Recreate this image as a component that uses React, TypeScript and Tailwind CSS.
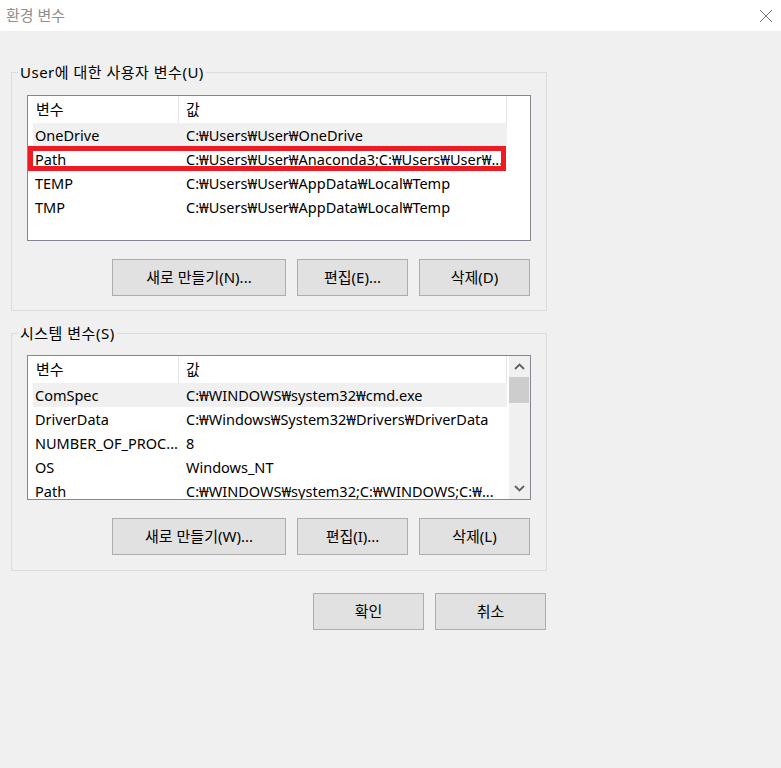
import React from "react";

type Row = { name: string; value: string; hover?: boolean; marked?: boolean };

const userVars: Row[] = [
  { name: "OneDrive", value: "C:₩Users₩User₩OneDrive", hover: true },
  { name: "Path", value: "C:₩Users₩User₩Anaconda3;C:₩Users₩User₩...", marked: true },
  { name: "TEMP", value: "C:₩Users₩User₩AppData₩Local₩Temp" },
  { name: "TMP", value: "C:₩Users₩User₩AppData₩Local₩Temp" },
];

const systemVars: Row[] = [
  { name: "ComSpec", value: "C:₩WINDOWS₩system32₩cmd.exe", hover: true },
  { name: "DriverData", value: "C:₩Windows₩System32₩Drivers₩DriverData" },
  { name: "NUMBER_OF_PROC...", value: "8" },
  { name: "OS", value: "Windows_NT" },
  { name: "Path", value: "C:₩WINDOWS₩system32;C:₩WINDOWS;C:₩..." },
];

function Chevron({ up }: { up?: boolean }) {
  return (
    <svg width="11" height="7" viewBox="0 0 11 7" className="block">
      <path
        d={up ? "M1 6 L5.5 1.5 L10 6" : "M1 1 L5.5 5.5 L10 1"}
        fill="none"
        stroke="#606060"
        strokeWidth="1.8"
      />
    </svg>
  );
}

function WinButton({ label, w }: { label: string; w: string }) {
  return (
    <button
      type="button"
      className={`${w} h-[37px] border border-[#adadad] bg-[#e1e1e1] text-[15px] leading-none text-black`}
    >
      {label}
    </button>
  );
}

function VarList({ rows, scroll, h }: { rows: Row[]; scroll?: boolean; h: string }) {
  return (
    <div className={`flex ${h} w-full overflow-hidden border border-[#828790] bg-white`}>
      <div className="min-w-0 flex-1 pl-[5px]">
        <div className="flex h-[27px] w-[474px] items-center border-r border-[#e5e5e5]">
          <div className="w-[145px] shrink-0 pl-[3px]">변수</div>
          <div className="h-full w-px shrink-0 bg-[#e5e5e5]" />
          <div className="pl-[7px]">값</div>
        </div>
        {rows.map((r) => (
          <div
            key={r.name}
            className={`relative flex h-[24px] w-[474px] items-center whitespace-nowrap pt-px text-[14.5px] ${
              r.hover ? "bg-[#f0f0f0]" : ""
            }`}
          >
            <div className="w-[145px] shrink-0 pl-[2px]">{r.name}</div>
            <div className="w-px shrink-0" />
            <div className="pl-[7px]">{r.value}</div>
            {r.marked && (
              <div className="absolute -left-[5px] -top-[1px] right-[1px] bottom-0 border-[5px] border-[#ed1c24]" />
            )}
          </div>
        ))}
      </div>
      {scroll && (
        <div className="flex w-[21px] shrink-0 flex-col bg-[#f0f0f0]">
          <div className="flex h-[21px] items-center justify-center">
            <Chevron up />
          </div>
          <div className="mr-px h-[26px] bg-[#cdcdcd]" />
          <div className="flex-1" />
          <div className="flex h-[21px] items-center justify-center">
            <Chevron />
          </div>
        </div>
      )}
    </div>
  );
}

function Group({
  title,
  children,
  className = "",
}: {
  title: string;
  children: React.ReactNode;
  className?: string;
}) {
  return (
    <div className={`relative w-[536px] border border-[#dcdcdc] px-[15px] ${className}`}>
      <span className="absolute -top-[11px] left-[6px] bg-[#f0f0f0] px-[2px] text-[15px] leading-[20px] tracking-[0.5px]">
        {title}
      </span>
      {children}
    </div>
  );
}

export default function App() {
  return (
    <div className="flex h-[768px] w-[781px] flex-col font-['Noto_Sans','Noto_Sans_CJK_KR',sans-serif] text-[15px] text-black">
      <div className="flex h-[31px] items-center justify-between bg-white pl-[6px] pr-[8px]">
        <span className="text-[15px] text-[#8e8e8e]">환경 변수</span>
        <svg width="14" height="14" viewBox="0 0 14 14">
          <path d="M1 1 L13 13 M13 1 L1 13" stroke="#7d7d7d" strokeWidth="1" fill="none" />
        </svg>
      </div>

      <div className="flex-1 bg-[#f0f0f0] pl-[11px] pt-[41px]">
        <Group title="User에 대한 사용자 변수(U)" className="pt-[22px] pb-[14px]">
          <VarList rows={userVars} h="h-[146px]" />
          <div className="mt-[18px] flex justify-end gap-[11px] pr-px">
            <WinButton label="새로 만들기(N)..." w="w-[174px]" />
            <WinButton label="편집(E)..." w="w-[111px]" />
            <WinButton label="삭제(D)" w="w-[111px]" />
          </div>
        </Group>

        <Group title="시스템 변수(S)" className="mt-[22px] pt-[21px] pb-[15px]">
          <VarList rows={systemVars} scroll h="h-[145px]" />
          <div className="mt-[18px] flex justify-end gap-[11px] pr-px">
            <WinButton label="새로 만들기(W)..." w="w-[174px]" />
            <WinButton label="편집(I)..." w="w-[111px]" />
            <WinButton label="삭제(L)" w="w-[111px]" />
          </div>
        </Group>

        <div className="mt-[22px] flex w-[536px] justify-end gap-[11px] pr-px">
          <WinButton label="확인" w="w-[111px]" />
          <WinButton label="취소" w="w-[111px]" />
        </div>
      </div>
    </div>
  );
}
